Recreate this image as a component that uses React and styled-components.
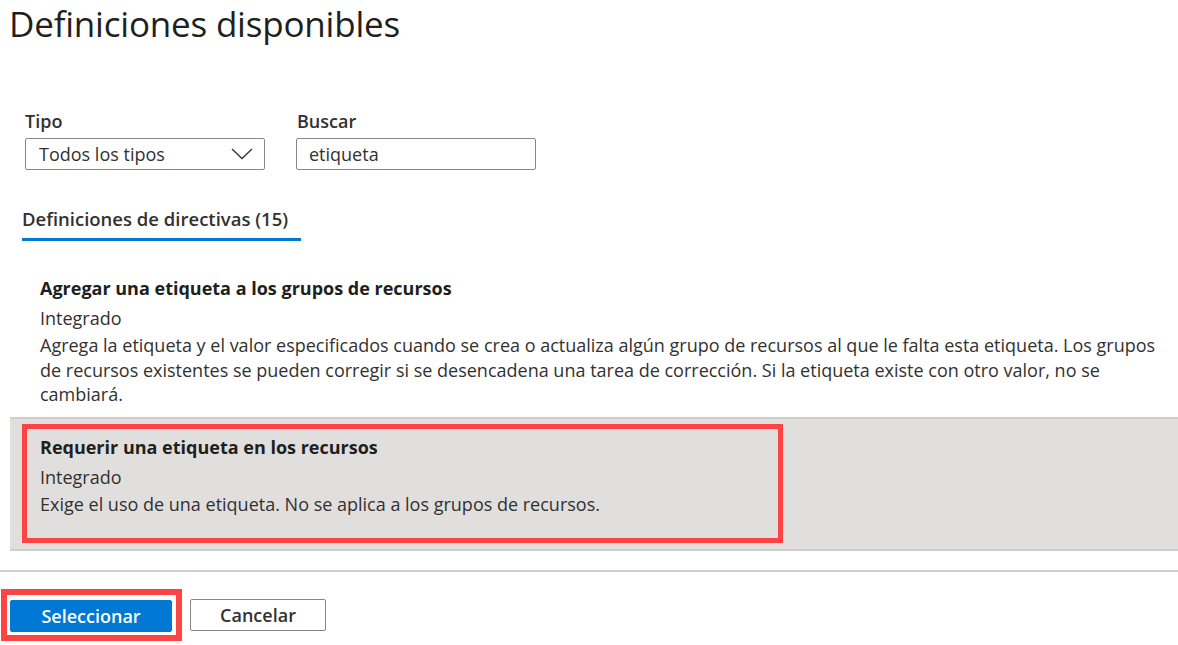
import React from 'react'
import styled, { createGlobalStyle } from 'styled-components'

const GlobalStyle = createGlobalStyle`
  html, body {
    margin: 0;
    padding: 0;
    background: #ffffff;
  }
  body {
    font-family: "Open Sans", "Noto Sans", "Liberation Sans", sans-serif;
    color: #323130;
  }
`

const Page = styled.div`
  width: 1178px;
  height: 645px;
  overflow: hidden;
  display: flex;
  flex-direction: column;
`

const Title = styled.h1`
  box-sizing: border-box;
  margin: 0;
  padding: 2px 0 0 9px;
  height: 53px;
  font-size: 35px;
  line-height: 44px;
  font-weight: 400;
  letter-spacing: -0.2px;
  color: #201f1e;
`

const Filters = styled.div`
  display: flex;
  gap: 31px;
  padding: 58px 0 0 25px;
`

const Field = styled.div`
  display: flex;
  flex-direction: column;
`

const Label = styled.label`
  font-size: 18px;
  font-weight: 600;
  line-height: 20px;
  height: 27px;
  padding-left: ${(p) => p.$indent || 0}px;
`

const Box = styled.div`
  box-sizing: border-box;
  width: 240px;
  height: 32px;
  border: 1px solid #8a8886;
  border-radius: 2px;
  display: flex;
  align-items: center;
  justify-content: space-between;
  padding: 0 11px 0 ${(p) => p.$pad}px;
  font-size: 18px;
  color: #323130;
`

const Tabs = styled.div`
  padding: 38px 0 0 22px;
`

const Tab = styled.div`
  display: inline-block;
  box-sizing: border-box;
  font-size: 18.5px;
  font-weight: 600;
  line-height: 22px;
  padding-bottom: 8px;
  border-bottom: 3px solid #0078d4;
  width: 279px;
`

const List = styled.div`
  padding-top: 35px;
  padding-left: 10px;
`

const Row = styled.div`
  box-sizing: border-box;
  padding: ${(p) => (p.$selected ? '5px 0 6px 12px' : '0 0 10px 30px')};
  background: ${(p) => (p.$selected ? '#e1dfdd' : 'transparent')};
  border-top: ${(p) => (p.$selected ? '2px solid #d0cfce' : 'none')};
  border-bottom: ${(p) => (p.$selected ? '2px solid #d0cfce' : 'none')};
`

const Highlight = styled.div`
  width: 761px;
  box-sizing: border-box;
  border: 5px solid #fc4444;
  padding: 6px 0 22px 13px;
`

const ItemTitle = styled.div`
  font-size: 18px;
  font-weight: 700;
  line-height: 24px;
  margin-bottom: 6px;
  color: #201f1e;
`

const ItemType = styled.div`
  font-size: 18px;
  line-height: 24px;
  margin-bottom: 3px;
`

const ItemDesc = styled.div`
  font-size: 18px;
  line-height: 24.5px;
`

const Separator = styled.div`
  height: 2px;
  background: #cfcfcf;
  margin-top: 19px;
`

const Footer = styled.div`
  display: flex;
  align-items: center;
  gap: 8px;
  padding: 17px 0 0 1px;
`

const Marker = styled.div`
  border: 6px solid #fc4444;
  padding: 5px 4px 3px 3px;
`

const Button = styled.button`
  box-sizing: border-box;
  height: 32px;
  width: ${(p) => p.$w}px;
  border-radius: 2px;
  font-family: inherit;
  font-size: 18px;
  font-weight: 600;
  cursor: pointer;
  padding: 0;
  border: 1px solid ${(p) => (p.$primary ? '#0078d4' : '#8a8886')};
  background: ${(p) => (p.$primary ? '#0078d4' : '#ffffff')};
  color: ${(p) => (p.$primary ? '#ffffff' : '#323130')};
  display: block;
`

const Chevron = () => (
  <svg width="22" height="12" viewBox="0 0 22 12">
    <polyline points="1,1 11,10.5 21,1" fill="none" stroke="#323130" strokeWidth="1.3" />
  </svg>
)

const items = [
  {
    id: 1,
    title: 'Agregar una etiqueta a los grupos de recursos',
    type: 'Integrado',
    desc: 'Agrega la etiqueta y el valor especificados cuando se crea o actualiza algún grupo de recursos al que le falta esta etiqueta. Los grupos de recursos existentes se pueden corregir si se desencadena una tarea de corrección. Si la etiqueta existe con otro valor, no se cambiará.',
  },
  {
    id: 2,
    title: 'Requerir una etiqueta en los recursos',
    type: 'Integrado',
    desc: 'Exige el uso de una etiqueta. No se aplica a los grupos de recursos.',
  },
]

const ItemBody = ({ item }) => (
  <>
    <ItemTitle>{item.title}</ItemTitle>
    <ItemType>{item.type}</ItemType>
    <ItemDesc>{item.desc}</ItemDesc>
  </>
)

export default function App() {
  return (
    <Page>
      <GlobalStyle />
      <Title>Definiciones disponibles</Title>

      <Filters>
        <Field>
          <Label>Tipo</Label>
          <Box $pad={13}>
            <span>Todos los tipos</span>
            <Chevron />
          </Box>
        </Field>
        <Field>
          <Label $indent={1}>Buscar</Label>
          <Box $pad={12}>
            <span>etiqueta</span>
          </Box>
        </Field>
      </Filters>

      <Tabs>
        <Tab>Definiciones de directivas (15)</Tab>
      </Tabs>

      <List>
        {items.map((item) =>
          item.id === 2 ? (
            <Row key={item.id} $selected>
              <Highlight>
                <ItemBody item={item} />
              </Highlight>
            </Row>
          ) : (
            <Row key={item.id}>
              <ItemBody item={item} />
            </Row>
          )
        )}
      </List>

      <Separator />

      <Footer>
        <Marker>
          <Button $primary $w={162}>Seleccionar</Button>
        </Marker>
        <Button $w={136}>Cancelar</Button>
      </Footer>
    </Page>
  )
}
